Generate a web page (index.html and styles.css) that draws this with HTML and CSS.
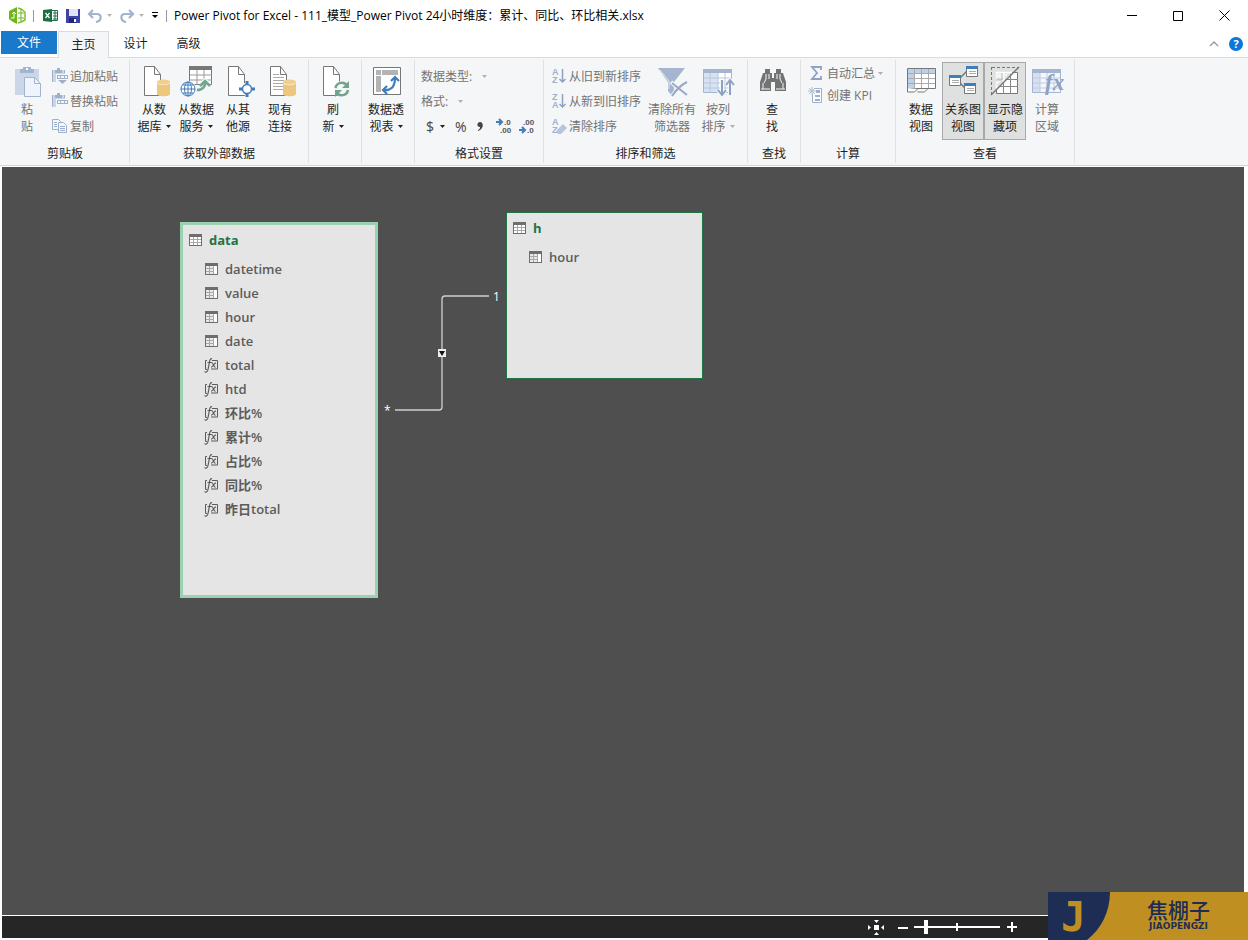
FILE: index.html
```html
<!DOCTYPE html>
<html lang="zh-CN">
<head>
<meta charset="utf-8">
<title>Power Pivot for Excel</title>
<link rel="stylesheet" href="styles.css">
</head>
<body>
<svg class="sprite" aria-hidden="true">
  <symbol id="table" viewBox="0 0 13 12"><path fill="#fff" d="M0 0h13v12H0z"/><path fill="#6e6e6e" d="M0 0h13v3H0zM0 0h1v12H0zM12 0h1v12h-1zM0 11h13v1H0z"/><path fill="#a9a9a9" d="M4 3h1v8H4zM8 3h1v8H8zM1 5h11v1H1zM1 8h11v1H1z"/></symbol>
  <symbol id="column" viewBox="0 0 13 12"><path fill="#fff" d="M0 0h13v12H0z"/><path fill="#e8e8e8" d="M1 3h7v8H1z"/><path fill="#6e6e6e" d="M0 0h13v3H0zM0 0h1v12H0zM12 0h1v12h-1zM0 11h13v1H0z"/><path fill="#a9a9a9" d="M8 3h1v8H8zM4 3h1v8H4zM1 5h7v1H1zM1 8h7v1H1z"/></symbol>
  <symbol id="measure" viewBox="0 0 15 15"><g fill="none" stroke="#5a5a5a"><path d="M3 2.500H1.500v9H3M8 2.500h5.500v8.500H7"/><path d="M8 .8C6.300.3 5.900 2 5.500 4L4 11.500C3.600 13.600 2.500 14.500.5 13.800M3.500 4.500h4M7.500 4.500c2 0 2 5 4 5M12 4.800c-2 0-3 4.700-5 4.400" stroke-width="1.200"/></g></symbol>
  <symbol id="doc" viewBox="0 0 32 32"><path d="M6.500.5h10l6 8v21h-16z" fill="#fff" stroke="#777"/><path d="M16.500.5v8h6" fill="none" stroke="#777"/></symbol>
  <symbol id="cyl" viewBox="0 0 13 18"><path fill="#edc77b" d="M0 3v12c0 3 13 3 13 0V3z"/><ellipse cx="6.500" cy="3" rx="6.500" ry="2.500" fill="#f0cf8c"/><path d="M0 3.500c1 3 12 3 13 0" fill="none" stroke="#fbeccd"/></symbol>
  <symbol id="caret" viewBox="0 0 5 3"><path d="M0 0h5L2.500 3z" fill="currentColor"/></symbol>
  <symbol id="paste" viewBox="0 0 16 16"><path fill="#cbd6e8" d="M0 2h13v12H0z"/><path fill="#9fb0cd" d="M3 2h2V0h3v2h2v3H3zM0 2h1v12H0zM12 2h1v3h-1z"/><path fill="#f5f6f7" d="M4 6h12v9H4z"/><path fill="#9fb0cd" d="M5 7h11v1H5zM5 7h1v4H5zM15 7h1v4h-1zM5 10h11v1H5zM8 8h1v2H8zM12 8h1v2h-1z"/></symbol>
</svg>

<header class="titlebar">
  <div class="quick">
    <svg width="18" height="18" viewBox="0 0 18 18"><path d="M5 2l4-2v17l-4-2-4-3V4z" fill="#70b51a"/><path d="M10 1l3 1 4 3v8l-4 2-3 1" fill="none" stroke="#83bf32" stroke-width="1.500"/><path d="M10 6h6M10 11h6M13 2v13" stroke="#70b51a"/><path d="M3 11h3V6M4 7l2-2 2 2" fill="none" stroke="#fff"/></svg>
    <i class="bar"></i>
    <button class="excel" aria-label="Excel"><svg width="16" height="14"><path d="M8 1.500h6.500v10H8z" fill="#fff" stroke="#217346"/><path d="M10 4h4M10 7h4M10 10h4" stroke="#217346"/><path d="M12 2v10" stroke="#217346"/><path d="M0 1l9-1v13l-9-1z" fill="#16723f"/><path d="M2.500 4l4 5m0-5l-4 5" stroke="#fff" stroke-width="1.300"/></svg></button>
    <button aria-label="保存"><svg width="14" height="14"><path d="M0 0h14v14H0z" fill="#3d42a8"/><path d="M3 0h9v7H3z" fill="#dfe5f8"/><path d="M3 9h7v5H3z" fill="#202775"/><path d="M8 10h2v3H8z" fill="#fff"/></svg></button>
    <button class="with-caret" aria-label="撤消"><svg width="16" height="14"><path d="M6 1L2 5l4 4M2 5h8c5 0 5 7-1 8" fill="none" stroke="#a2b3ce" stroke-width="2.200"/></svg><svg class="caret"><use href="#caret"/></svg></button>
    <button class="with-caret" aria-label="恢复"><svg width="16" height="14"><path d="M10 1l4 4-4 4M14 5H6c-5 0-5 7 1 8" fill="none" stroke="#a2b3ce" stroke-width="2.200"/></svg><svg class="caret"><use href="#caret"/></svg></button>
    <button aria-label="自定义"><svg width="8" height="7"><path d="M1 0h6v1H1zM1 3h6L4 6z"/></svg></button>
    <i class="bar"></i>
  </div>
  <h1 class="title">Power Pivot for Excel - 111_模型_Power Pivot 24小时维度：累计、同比、环比相关.xlsx</h1>
  <div class="window">
    <button aria-label="最小化"><svg width="10" height="10"><path d="M0 4h10v1H0z"/></svg></button>
    <button aria-label="最大化"><svg width="10" height="10"><path d="M.5.5h9v9h-9z" fill="none" stroke="#000"/></svg></button>
    <button aria-label="关闭"><svg width="11" height="11"><path d="M.5.5l10 10m0-10l-10 10" stroke="#000"/></svg></button>
  </div>
</header>

<nav class="tabs">
  <button class="tab file">文件</button>
  <button class="tab active">主页</button>
  <button class="tab">设计</button>
  <button class="tab">高级</button>
  <div class="help">
    <button aria-label="折叠"><svg width="10" height="6"><path d="M1 5l4-4 4 4" fill="none" stroke="#999" stroke-width="1.400"/></svg></button>
    <button class="question" aria-label="帮助">?</button>
  </div>
</nav>

<main class="ribbon">
  <section class="group medium clipboard">
    <div class="tools">
      <button class="big off"><svg width="32" height="32"><path fill="#cbd6e8" d="M4 3h24v26H4z"/><path fill="#a3b4cf" d="M9 3h3V1h8v2h3v4H9z"/><path fill="#fff" d="M15 2h2v2h-2z"/><path d="M13.500 11.500h10l6 6v13h-16z" fill="#eef3fc" stroke="#a3b4cf"/><path d="M23.500 11.500v6h6" fill="none" stroke="#a3b4cf"/></svg><span>粘<br>贴</span></button>
      <div class="rows">
        <button class="small off"><svg width="16" height="16"><use href="#paste"/><path fill="#9fb0cd" d="M6 12h9l-4.500 4z"/></svg>追加粘贴</button>
        <button class="small off"><svg width="16" height="16"><use href="#paste"/></svg>替换粘贴</button>
        <button class="small off"><svg width="16" height="16"><path d="M.5 1.500h6l2 2v8h-8z" fill="#f5f6f7" stroke="#9fb0cd"/><path d="M6.500 4.500h5l3 3v7h-8z" fill="#f5f6f7" stroke="#9fb0cd"/><path d="M2 4.500h3M2 6.500h3M2 8.500h3M8 8.500h5M8 10.500h5M8 12.500h5" stroke="#9fb0cd"/></svg>复制</button>
      </div>
    </div>
    <h2>剪贴板</h2>
  </section>

  <section class="group large">
    <div class="tools">
      <button class="big"><svg width="32" height="32"><use href="#doc"/><use href="#cyl" x="19" y="13" width="13" height="18"/></svg><span>从数<br>据库<svg class="caret"><use href="#caret"/></svg></span></button>
      <button class="big"><svg width="32" height="32"><path d="M9.500.5h22v18h-22z" fill="#fff" stroke="#777"/><path d="M9 0h23v4H9z" fill="#777"/><path d="M17 4v15M24 4v15M10 9h22M10 14h22" stroke="#999"/><circle cx="8" cy="23" r="8" fill="#f5f6f7"/><g fill="#fff" stroke="#3f7dbb"><circle cx="8" cy="23" r="7"/><path d="M8 16v14M1 23h14M3 19h10M3 27h10"/><ellipse cx="8" cy="23" rx="3.500" ry="7" fill="none"/></g><path d="M18 24c6 0 8-4 7-8M21 19l4-4 4 4" fill="none" stroke="#f5f6f7" stroke-width="5"/><path d="M17 24c6 0 9-4 8-9M20 20l5-5 5 5" fill="none" stroke="#71a790" stroke-width="2.500"/></svg><span>从数据<br>服务<svg class="caret"><use href="#caret"/></svg></span></button>
      <button class="big"><svg width="32" height="32"><use href="#doc"/><circle cx="25" cy="23" r="6.500" fill="#f5f6f7"/><path d="M25 15v5M25 26v5M17 23h5M28 23h5" stroke="#3f7dbb" stroke-width="3"/><circle cx="25" cy="23" r="4.500" fill="#fff" stroke="#3f7dbb" stroke-width="1.500"/></svg><span>从其<br>他源</span></button>
      <button class="big"><svg width="32" height="32"><use href="#doc"/><path d="M9 8.500h6M9 11.500h11M9 14.500h11M9 17.500h11M9 20.500h11M9 23.500h11" stroke="#aaa"/><use href="#cyl" x="19" y="13" width="13" height="18"/></svg><span>现有<br>连接</span></button>
    </div>
    <h2>获取外部数据</h2>
  </section>

  <section class="group narrow">
    <div class="tools">
      <button class="big"><svg width="32" height="32"><use href="#doc"/><circle cx="25" cy="23" r="8" fill="#f5f6f7"/><path d="M18.500 22c1-6 9-7 12-2M31 24c-1 6-9 7-12 2" fill="none" stroke="#71a48b" stroke-width="2.500"/><path d="M32 15v7h-7zM18 31v-7h7z" fill="#71a48b"/></svg><span>刷<br>新<svg class="caret"><use href="#caret"/></svg></span></button>
    </div>
  </section>

  <section class="group narrow">
    <div class="tools">
      <button class="big"><svg width="32" height="32"><path d="M3.500 1.500h27v27h-27z" fill="#fff" stroke="#777"/><path fill="#b3b3b3" d="M6 4h5v5H6zM12 4h16v5H12zM6 10h5v16H6z"/><path d="M13 24c8 1 12-3 12-12M21 15l4-4 4 4M17 20l-4 4 4 4" fill="none" stroke="#3f7dbb" stroke-width="2.200"/></svg><span>数据透<br>视表<svg class="caret"><use href="#caret"/></svg></span></button>
    </div>
  </section>

  <section class="group medium format">
    <div class="tools">
      <div class="rows">
        <button class="small off">数据类型:<svg class="caret"><use href="#caret"/></svg></button>
        <button class="small off">格式:<svg class="caret"><use href="#caret"/></svg></button>
        <div class="numbers">
          <button>$<svg class="caret"><use href="#caret"/></svg></button>
          <button>%</button>
          <button aria-label="千位分隔"><svg width="7" height="9"><path d="M3 0c4 0 4 7-2 9V8c2-1 2-2 2-3C-1 5 0 0 3 0z" fill="#444"/></svg></button>
          <div class="decimals">
            <button class="digits" aria-label="增加小数"><svg width="16" height="14"><path d="M0 3h6M3 0l3 3-3 3" fill="none" stroke="#3f7dbb" stroke-width="2"/><text x="8" y="6">.0</text><text x="4" y="14">.00</text></svg></button>
            <button class="digits" aria-label="减少小数"><svg width="16" height="14"><path d="M0 11h6M3 8l3 3-3 3" fill="none" stroke="#3f7dbb" stroke-width="2"/><text x="4" y="6">.00</text><text x="8" y="14">.0</text></svg></button>
          </div>
        </div>
      </div>
    </div>
    <h2>格式设置</h2>
  </section>

  <section class="group wide sort">
    <div class="tools">
      <div class="rows">
        <button class="small off"><svg width="16" height="16"><text class="az" x="1" y="7">A</text><text class="az" x="1" y="15">Z</text><path d="M11.500 1v13M8.500 11l3 3 3-3" fill="none" stroke="#8fa2c2" stroke-width="1.500"/></svg>从旧到新排序</button>
        <button class="small off"><svg width="16" height="16"><text class="az" x="1" y="7">Z</text><text class="az" x="1" y="15">A</text><path d="M11.500 1v13M8.500 11l3 3 3-3" fill="none" stroke="#8fa2c2" stroke-width="1.500"/></svg>从新到旧排序</button>
        <button class="small off"><svg width="16" height="16"><text class="az" x="1" y="7">A</text><text class="az" x="1" y="15">Z</text><path d="M5 13l7-7 4 4-6 6H7z" fill="#b7c5dc"/></svg>清除排序</button>
      </div>
      <button class="big off extra"><svg width="32" height="32"><path fill="#a6b5cf" d="M2 2h27L18 16v14h-2l-4-5v-9z"/><path d="M4 4l9 11v8" fill="none" stroke="#dfe6f2"/><path d="M15 16l16 14M31 16c-6 3-11 8-15 14" fill="none" stroke="#f5f6f7" stroke-width="4"/><path d="M16 17l15 12M31 16c-6 3-11 8-15 14" fill="none" stroke="#9aabc8" stroke-width="2.200"/></svg><span>清除所有<br>筛选器</span></button>
      <button class="big off"><svg width="32" height="32"><path d="M1.500 3.500h28v23h-28z" fill="#fff" stroke="#a6b5cf"/><path fill="#d7e2f3" d="M2 7h14v19H2z"/><path fill="#a6b5cf" d="M1 3h29v4H1z"/><path d="M8 7v19M16 7v19M23 7v19M2 12h27M2 17h27M2 22h27" stroke="#bac7dc"/><path d="M20 14v14M16 24l4 5 4-5M28 29V15M24 19l4-5 4 5" fill="none" stroke="#f5f6f7" stroke-width="4"/><path d="M20 14v14M16 24l4 5 4-5M28 29V15M24 19l4-5 4 5" fill="none" stroke="#8fa2c2" stroke-width="2"/></svg><span>按列<br>排序<svg class="caret"><use href="#caret"/></svg></span></button>
    </div>
    <h2>排序和筛选</h2>
  </section>

  <section class="group narrow">
    <div class="tools">
      <button class="big"><svg width="32" height="32"><g fill="#737373"><path d="M9 3h5v4h2v5h2V7h2V3h5v4h2l3 9v9H19v-9h-4v9H4v-9l3-9h2z"/></g><path d="M10 8v5l-2 4M13 8v5M21 8v5M24 8v5l2 4M5 23h9M20 23h9M7 17v6M27 17v6" fill="none" stroke="#f5f6f7"/></svg><span>查<br>找</span></button>
    </div>
    <h2>查找</h2>
  </section>

  <section class="group calc">
    <div class="tools">
      <div class="rows tight">
        <button class="small off"><svg width="16" height="16"><path d="M13 5V2H4l5 6-5 6h9v-3" fill="none" stroke="#8fa2c2" stroke-width="1.800"/></svg>自动汇总<svg class="caret"><use href="#caret"/></svg></button>
        <button class="small off"><svg width="16" height="16"><path d="M4.500 1.500h9v14h-9z" fill="#fff" stroke="#9fb0cd"/><path fill="#9fb0cd" d="M8 3h4v3H8zM7 8h5v2H7zM7 12h5v2H7z"/><path fill="#f5f6f7" d="M1 0h6v7H1z"/><path d="M4 0v8M0 4h8M1 1l6 6M7 1L1 7" stroke="#aebdd6"/></svg>创建 KPI</button>
      </div>
    </div>
    <h2>计算</h2>
  </section>

  <section class="group large view">
    <div class="tools">
      <button class="big"><svg width="32" height="32"><path d="M2.500 2.500h28v20h-28z" fill="#fff" stroke="#777"/><path fill="#bdd2e8" d="M3 3h27v4H3zM3 3h6v19H3z"/><path d="M9.500 3v19M16.500 3v19M23.500 3v19M3 7.500h27M3 12.500h27M3 17.500h27" stroke="#aaa"/><path d="M2.500 22v4h7l3-3M12.500 26h7l3-3" fill="#fff" stroke="#777"/></svg><span>数据<br>视图</span></button>
      <button class="big on"><svg width="32" height="32"><path d="M12 13l8-8M12 16l7 7" stroke="#777" stroke-width="1.500"/><g fill="#fff" stroke="#777"><path d="M19.500.5h11v10h-11zM2.500 9.500h11v10h-11zM17.500 17.500h11v10h-11z"/></g><path fill="#3f7dbb" d="M19 0h12v3H19zM2 9h12v3H2zM17 17h12v3H17z"/><path d="M22 5.500h7M22 7.500h7M5 14.500h7M5 16.500h7M20 22.500h7M20 24.500h7" stroke="#aaa"/></svg><span>关系图<br>视图</span></button>
      <button class="big on"><svg width="32" height="32"><path d="M7.500 6.500h21v21h-21z" fill="#fff" stroke="#777"/><path d="M7 13.500h22M7 20.500h22M14.500 6v22M21.500 6v22" stroke="#888"/><path d="M2 29V1h26z" fill="#dfe1e1"/><path d="M7.500 24V6.500H23M7 13.500h9M14.500 6v10" fill="none" stroke="#fff" stroke-width="1.500"/><path d="M7 8h12L7 20z" fill="#f4f4f4"/><path d="M13 7v7H7M8 13h6" fill="none" stroke="#bbb"/><path d="M3 1.500h27M2.500 1v28" stroke="#777" stroke-dasharray="3 2"/><path d="M2 29L30 1" stroke="#777" stroke-width="1.500"/></svg><span>显示隐<br>藏项</span></button>
      <button class="big off"><svg width="32" height="32"><path d="M1.500 3.500h28v23h-28z" fill="#f3f7fe" stroke="#a6b5cf"/><path fill="#d5e0f1" d="M2 7h7v19H2z"/><path fill="#a6b5cf" d="M1 3h29v4H1z"/><path d="M9 7v19M16 7v19M23 7v19M2 12h27M2 17h27M2 22h27" stroke="#c0ccdf"/><text class="fx" x="14" y="24">fx</text></svg><span>计算<br>区域</span></button>
    </div>
    <h2>查看</h2>
  </section>
</main>

<section class="canvas">
  <svg class="links" width="520" height="300"><path d="M393 243h44q3 0 3-3V132q0-3 3-3h44" fill="none" stroke="#d0d0d0" stroke-width="1.300"/><path d="M436 182h8v8h-8z" fill="#eee"/><path d="M437 184h6l-3 5z" fill="#111"/></svg>
  <span class="end many">*</span>
  <span class="end one">1</span>
  <article class="card data">
    <h3><svg><use href="#table"/></svg>data</h3>
    <ul>
      <li><svg><use href="#column"/></svg>datetime</li>
      <li><svg><use href="#column"/></svg>value</li>
      <li><svg><use href="#column"/></svg>hour</li>
      <li><svg><use href="#column"/></svg>date</li>
      <li><svg class="fn"><use href="#measure"/></svg>total</li>
      <li><svg class="fn"><use href="#measure"/></svg>htd</li>
      <li><svg class="fn"><use href="#measure"/></svg>环比%</li>
      <li><svg class="fn"><use href="#measure"/></svg>累计%</li>
      <li><svg class="fn"><use href="#measure"/></svg>占比%</li>
      <li><svg class="fn"><use href="#measure"/></svg>同比%</li>
      <li><svg class="fn"><use href="#measure"/></svg>昨日total</li>
    </ul>
  </article>
  <article class="card hours">
    <h3><svg><use href="#table"/></svg>h</h3>
    <ul><li><svg><use href="#column"/></svg>hour</li></ul>
  </article>
</section>

<footer class="status">
  <button aria-label="适应屏幕"><svg width="16" height="16" fill="#fff"><path d="M6 6h5v5H6zM6 1h5L8.500 4zM6 16h5l-2.500-3zM0 6v5l3-2.500zM16 6v5l-3-2.500z"/></svg></button>
  <button aria-label="缩小"><svg width="10" height="10" fill="#fff"><path d="M0 5h10v2H0z"/></svg></button>
  <input class="zoom" type="range" min="0" max="100" value="12" aria-label="缩放">
  <button aria-label="放大"><svg width="10" height="10" fill="#fff"><path d="M0 4h10v2H0zM4 0h2v10H4z"/></svg></button>
</footer>

<aside class="brand">
  <span class="mark"><svg viewBox="0 0 62 48" width="62" height="48"><path d="M0 0h62C62 20 53 37 39 48H0z" fill="#1e2d54"/></svg><b>J</b></span>
  <span class="name"><strong>焦棚子</strong><small>JIAOPENGZI</small></span>
</aside>
</body>
</html>
```
FILE: styles.css
```css
* { box-sizing: border-box; }
body {
  margin: 0;
  min-height: 100vh;
  display: flex;
  flex-direction: column;
  position: relative;
  background: #fff;
  color: #1e1e1e;
  font: 12px/17px "Open Sans", "Noto Sans CJK SC", sans-serif;
}
button {
  border: 0;
  padding: 0;
  background: none;
  color: inherit;
  font: inherit;
  display: flex;
  align-items: center;
  justify-content: center;
}
svg { display: block; flex: none; }
h1, h2, h3, ul { margin: 0; padding: 0; font: inherit; list-style: none; }
.sprite { display: none; }
.caret { width: 5px; height: 3px; }

.titlebar { display: flex; align-items: center; height: 31px; padding: 0 1px 0 8px; color: #000; }
.quick { display: flex; align-items: center; gap: 7px; }
.quick .bar { width: 1px; height: 12px; background: #999; }
.quick .excel { margin-left: 2px; }
.quick .with-caret { gap: 4px; color: #b5b5b5; }
.title { flex: 1; padding-left: 7px; white-space: nowrap; }
.window { display: flex; }
.window button { width: 46px; height: 31px; }

.tabs { display: flex; height: 27px; padding-left: 1px; border-bottom: 1px solid #dadbdc; }
.tab { width: 53px; height: 25px; }
.tab.file { width: 56px; height: 23px; background: #1979ca; color: #fff; }
.tab.active { height: 27px; margin-left: 1px; padding-bottom: 2px; width: 51px; background: #f5f6f7; border: 1px solid #dadbdc; border-bottom: 0; }
.help { display: flex; align-items: center; gap: 10px; margin-left: auto; padding-right: 5px; }
.question { width: 14px; height: 14px; border-radius: 7px; background: #0b77d8; color: #fff; font-weight: 700; font-size: 11px; line-height: 14px; }

.ribbon { display: flex; height: 108px; padding: 2px 0 2px 1px; background: #f5f6f7; border-bottom: 1px solid #d4d6d7; }
.group { display: flex; flex-direction: column; justify-content: space-between; width: 95px; border-right: 1px solid #e0e1e2; }
.group h2 { text-align: center; line-height: 18px; }
.group.narrow { width: 53px; }
.group.medium { width: 129px; }
.group.large { width: 179px; }
.group.wide { width: 204px; }
.tools { display: flex; padding: 2px 0 0 3px; }
.clipboard .tools { padding-left: 5px; }
.view .tools { padding-left: 4px; }
.big { width: 42px; height: 78px; padding-top: 4px; flex-direction: column; justify-content: flex-start; gap: 3px; white-space: nowrap; }
.big > svg { overflow: visible; }
.big .caret { display: inline-block; margin-left: 4px; vertical-align: 3px; }
.big.extra { width: 50px; }
.big.on { background: #dfe1e1; box-shadow: inset 0 0 0 1px #a6a8a9; }
.off { color: #737373; }
.off .caret { color: #b0b0b0; }
.rows { display: flex; flex-direction: column; align-items: flex-start; gap: 7px; padding-top: 5px; }
.rows.tight { gap: 4px; padding: 2px 0 0 4px; }
.small { height: 18px; gap: 2px; white-space: nowrap; }
.tight .small { gap: 3px; }
.clipboard .rows { padding-left: 4px; }
.format .rows { padding-left: 3px; }
.format .small { gap: 10px; }
.sort .rows { padding-left: 4px; margin-right: 6px; }
.numbers { display: flex; align-items: center; gap: 10px; height: 18px; padding-left: 5px; font-size: 14px; color: #444; }
.numbers .caret { margin-left: 6px; color: #222; }
.decimals { display: flex; gap: 7px; padding-left: 2px; }
.digits svg { overflow: visible; }
.digits text { font: 700 8px "Liberation Sans", sans-serif; fill: #555; }
.az { font: 700 9px/9px "Liberation Sans", sans-serif; fill: #9fb0cd; }
.small svg { overflow: visible; }
.fx { font: italic 700 23px "Liberation Serif", serif; fill: #8fa2c2; }

.canvas { position: relative; flex: 1; margin: 1px 4px 0 2px; background: #4f4f4f; overflow: hidden; }
.links { position: absolute; left: 0; top: 0; }
.end { position: absolute; color: #fff; font-size: 12px; line-height: 16px; }
.many { left: 382px; top: 236px; }
.one { left: 491px; top: 122px; }
.card { position: absolute; background: #e5e5e5; color: #5c5c5c; font-size: 13px; font-weight: 600; }
.card.data { left: 178px; top: 55px; width: 198px; height: 376px; border: 3px solid #9ad2b1; }
.card.hours { left: 504px; top: 45px; width: 197px; height: 167px; border: 1px solid #217346; }
.card h3, .card li { display: flex; align-items: center; gap: 7px; padding-left: 6px; }
.card h3 { height: 30px; margin-bottom: 2px; color: #217346; font-weight: 700; }
.card li { height: 24px; padding-left: 22px; }
.card svg { width: 13px; height: 12px; }
.card .fn { width: 15px; height: 15px; margin: 0 -1px; }

.status { display: flex; align-items: center; justify-content: flex-end; height: 22px; margin: 1px 4px 2px 2px; padding-right: 227px; background: #262626; box-shadow: 0 -1px #fff; }
.status button:first-child { margin-right: 14px; }
.zoom { appearance: none; width: 86px; height: 14px; margin: 0 7px 0 6px; background: linear-gradient(#fff, #fff) 42px 3px / 2px 8px no-repeat, linear-gradient(#fff, #fff) 0 6px / 100% 2px no-repeat; }
.zoom::-webkit-slider-thumb { appearance: none; width: 4px; height: 14px; background: #fff; }

.brand { position: absolute; right: 0; bottom: 0; display: flex; width: 200px; height: 48px; background: #bf9021; color: #1e2d54; }
.mark { position: relative; }
.mark b { position: absolute; left: 13px; top: 1px; font: 700 41px/48px "DejaVu Sans Mono", monospace; color: #bf9021; }
.name { display: flex; flex-direction: column; align-items: center; padding: 5px 0 0 37px; }
.name strong { font: 500 21px/25px "Noto Sans CJK SC", sans-serif; }
.name small { font: 700 9px/9px "DejaVu Sans", sans-serif; }
```
